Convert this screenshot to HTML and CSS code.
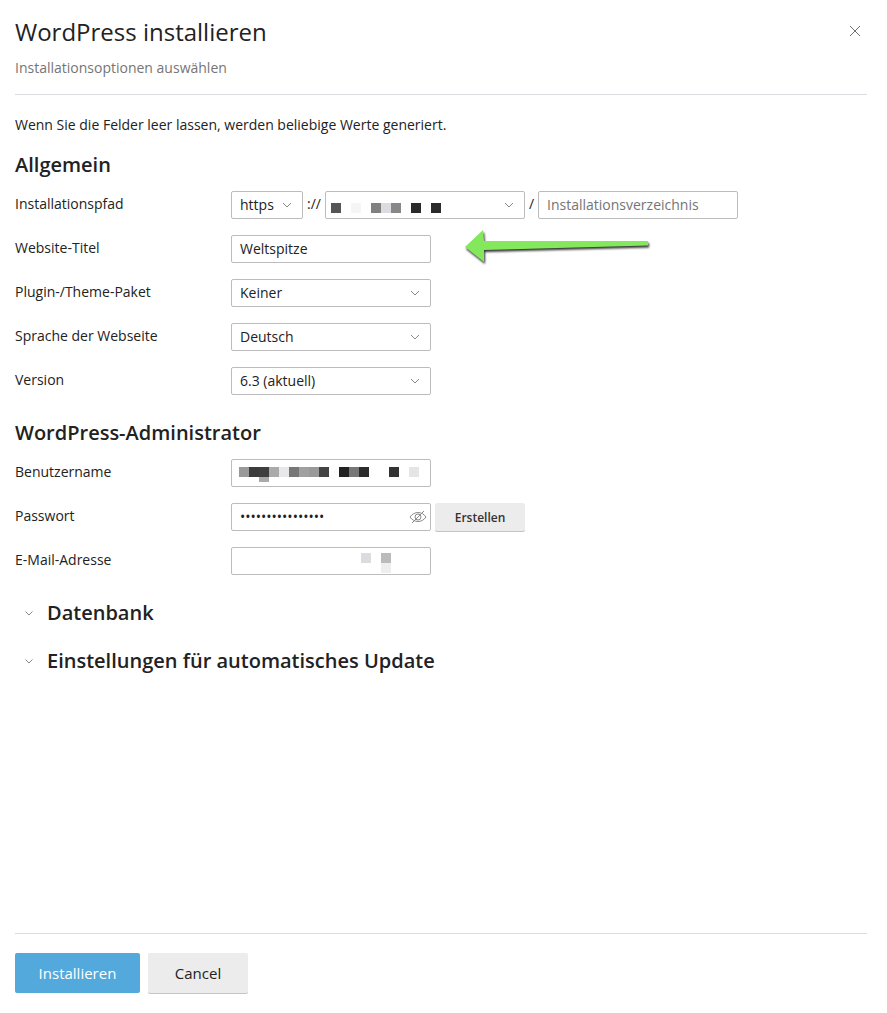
FILE: index.html
```html
<!DOCTYPE html>
<html lang="de">
<head>
  <meta charset="UTF-8">
  <meta name="viewport" content="width=device-width, initial-scale=1.0">
  <title>WordPress installieren</title>
  <link rel="stylesheet" href="styles.css">
</head>
<body>
  <div class="dialog">
    <div class="dialog-header">
      <h1>WordPress installieren</h1>
      <p class="subtitle">Installationsoptionen auswählen</p>
      <svg class="close-icon" width="12" height="12" viewBox="0 0 12 12"><path d="M1 1l10 10M11 1L1 11" fill="none" stroke="#6f6f6f" stroke-width="1"/></svg>
    </div>

    <div class="dialog-body">
      <p class="hint">Wenn Sie die Felder leer lassen, werden beliebige Werte generiert.</p>

      <h2>Allgemein</h2>
      <div class="form-row">
        <label>Installationspfad</label>
        <div class="control-group">
          <div class="field select field-scheme">https<svg class="chevron" width="10" height="6" viewBox="0 0 10 6"><path d="M1 1l4 4 4-4" fill="none" stroke="#888"/></svg></div>
          <span class="sep sep-scheme">://</span>
          <div class="field select field-domain">
            <div class="pixels pixels-domain">
              <i class="s55"></i><i></i><i class="sf5"></i><i></i><i class="s80"></i><i class="sdc"></i><i class="s88"></i><i></i><i class="s2a"></i><i></i><i class="s2a"></i>
            </div>
            <svg class="chevron" width="10" height="6" viewBox="0 0 10 6"><path d="M1 1l4 4 4-4" fill="none" stroke="#888"/></svg>
          </div>
          <span class="sep sep-slash">/</span>
          <div class="field field-dir placeholder">Installationsverzeichnis</div>
        </div>
      </div>
      <div class="form-row">
        <label>Website-Titel</label>
        <div class="field field-wide">Weltspitze</div>
      </div>
      <div class="form-row">
        <label>Plugin-/Theme-Paket</label>
        <div class="field select field-wide">Keiner<svg class="chevron" width="10" height="6" viewBox="0 0 10 6"><path d="M1 1l4 4 4-4" fill="none" stroke="#888"/></svg></div>
      </div>
      <div class="form-row">
        <label>Sprache der Webseite</label>
        <div class="field select field-wide">Deutsch<svg class="chevron" width="10" height="6" viewBox="0 0 10 6"><path d="M1 1l4 4 4-4" fill="none" stroke="#888"/></svg></div>
      </div>
      <div class="form-row">
        <label>Version</label>
        <div class="field select field-wide">6.3 (aktuell)<svg class="chevron" width="10" height="6" viewBox="0 0 10 6"><path d="M1 1l4 4 4-4" fill="none" stroke="#888"/></svg></div>
      </div>

      <h2 class="section-admin">WordPress-Administrator</h2>
      <div class="form-row">
        <label>Benutzername</label>
        <div class="field field-wide">
          <div class="pixels pixels-user">
            <i class="s99"></i><i class="s3c"></i><i class="s3f"><b class="drip"></b></i><i class="saa"></i><i class="se8"></i><i class="s77"></i><i class="sa0"></i><i class="s99"></i><i class="s44"></i><i></i><i class="s22"></i><i class="s77"></i><i class="s2c"></i><i></i><i></i><i class="s33"></i><i></i><i class="se5"></i>
          </div>
        </div>
      </div>
      <div class="form-row">
        <label>Passwort</label>
        <div class="control-group">
          <div class="field field-wide field-password">
            <span class="dots">••••••••••••••••</span>
            <svg class="eye" width="18" height="14" viewBox="0 0 18 14"><path d="M1 7c2-3 5-4.500 8-4.500S15 4 17 7c-2 3-5 4.500-8 4.500S3 10 1 7z" fill="none" stroke="#8a8a8a"/><circle cx="9" cy="7" r="3" fill="none" stroke="#8a8a8a"/><path d="M3 13L15 1" stroke="#8a8a8a"/></svg>
          </div>
          <button class="btn btn-generate" type="button">Erstellen</button>
        </div>
      </div>
      <div class="form-row">
        <label>E-Mail-Adresse</label>
        <div class="field field-wide">
          <div class="pixels pixels-mail">
            <i class="sdc"></i><i></i><i class="sbb"><b class="drip-long"></b></i>
          </div>
        </div>
      </div>

      <div class="collapsible collapsible-first">
        <svg class="chevron-small" width="8" height="5" viewBox="0 0 8 5"><path d="M.5.500L4 4 7.500.500" fill="none" stroke="#888"/></svg>
        <h2>Datenbank</h2>
      </div>
      <div class="collapsible">
        <svg class="chevron-small" width="8" height="5" viewBox="0 0 8 5"><path d="M.5.500L4 4 7.500.500" fill="none" stroke="#888"/></svg>
        <h2>Einstellungen für automatisches Update</h2>
      </div>
    </div>

    <div class="dialog-footer">
      <button class="btn btn-primary" type="button">Installieren</button>
      <button class="btn btn-cancel" type="button">Cancel</button>
    </div>
  </div>

  <!-- annotation drawn on top of the screenshot -->
  <svg class="arrow" width="200" height="44" viewBox="0 0 200 44">
    <path d="M5 17L23 0l1 11h164v4.500L24 20v12z" fill="#84e85c"/>
  </svg>
</body>
</html>
```

FILE: styles.css
```css
body {
  font-family: 'Open Sans', sans-serif;
  font-size: 14px;
  color: #222;
  margin: 0;
  padding: 0;
  background-color: #fff;
}

.dialog {
  height: 1013px;
  padding: 0 20px 0 15px;
  box-sizing: border-box;
  display: flex;
  flex-direction: column;
}

.dialog-header {
  position: relative;
  height: 94px;
  border-bottom: 1px solid #dcdce0;
}

h1 {
  font-size: 24px;
  font-weight: 400;
  line-height: 32px;
  margin: 0;
  padding-top: 16px;
}

.subtitle {
  font-size: 14px;
  line-height: 20px;
  color: #757575;
  margin: 10px 0 0;
}

.close-icon {
  position: absolute;
  right: 6px;
  top: 25px;
}

.dialog-body {
  flex: 1;
}

.hint {
  line-height: 20px;
  margin: 20px 0 0;
}

h2 {
  font-size: 20px;
  font-weight: 600;
  line-height: 28px;
  margin: 0;
}

.dialog-body > h2 {
  margin-top: 16px;
  margin-bottom: 12px;
}

.dialog-body > .section-admin {
  margin-top: 24px;
}

.form-row {
  display: flex;
  height: 28px;
  margin-bottom: 16px;
}

.form-row label {
  width: 216px;
  flex: none;
  line-height: 26px;
}

.control-group {
  display: flex;
}

.field {
  position: relative;
  height: 28px;
  box-sizing: border-box;
  border: 1px solid #bcbcbc;
  border-radius: 2px;
  padding: 0 8px;
  line-height: 26px;
  background-color: #fff;
}

.field-wide {
  width: 200px;
}

.field-scheme {
  width: 72px;
}

.field-domain {
  width: 200px;
}

.field-dir {
  width: 200px;
}

.placeholder {
  color: #757575;
}

.sep {
  width: 22px;
  line-height: 26px;
  text-align: center;
}

.sep-slash {
  width: 13px;
}

.chevron {
  position: absolute;
  right: 10px;
  top: 10px;
}

.pixels {
  position: absolute;
  display: flex;
}

.pixels i {
  display: block;
  position: relative;
  width: 10px;
  height: 10px;
}

.pixels-domain {
  left: 5px;
  top: 11px;
}

.pixels-user {
  left: 7px;
  top: 7px;
}

.pixels-mail {
  left: 129px;
  top: 5px;
}

.drip {
  position: absolute;
  left: 0;
  top: 10px;
  width: 10px;
  height: 5px;
  background-color: #aaa;
}

.drip-long {
  position: absolute;
  left: 0;
  top: 10px;
  width: 10px;
  height: 10px;
  background-color: #eee;
}

.s22 { background-color: #222; }
.s2a { background-color: #2a2a2a; }
.s2c { background-color: #2c2c2c; }
.s33 { background-color: #333; }
.s3c { background-color: #3c3c3c; }
.s3f { background-color: #3f3f3f; }
.s44 { background-color: #444; }
.s55 { background-color: #555; }
.s77 { background-color: #777; }
.s80 { background-color: #808080; }
.s88 { background-color: #888; }
.s99 { background-color: #999; }
.sa0 { background-color: #a0a0a0; }
.saa { background-color: #aaa; }
.sbb { background-color: #bbb; }
.sdc { background-color: #dcdce0; }
.se5 { background-color: #e5e5e5; }
.se8 { background-color: #e8e8ec; }
.sf5 { background-color: #f5f5f5; }

.dots {
  font-size: 14px;
  letter-spacing: 0;
}

.eye {
  position: absolute;
  right: 3px;
  top: 6px;
}

.btn {
  font-family: 'Open Sans', sans-serif;
  border: none;
  border-radius: 2px;
  cursor: pointer;
}

.btn-generate {
  margin-left: 4px;
  width: 90px;
  height: 28px;
  font-size: 12px;
  font-weight: 600;
  color: #333;
  background-color: #ececec;
  box-shadow: 0 1px 0 #c4c4c4;
}

.collapsible {
  display: flex;
  align-items: center;
  height: 28px;
  margin-bottom: 20px;
}

.collapsible-first {
  margin-top: 24px;
}

.chevron-small {
  margin-left: 10px;
  margin-right: 14px;
}

.dialog-footer {
  border-top: 1px solid #dcdce0;
  height: 80px;
  padding-top: 19px;
  box-sizing: border-box;
  display: flex;
  gap: 8px;
  align-items: flex-start;
}

.btn-primary {
  width: 125px;
  height: 40px;
  font-size: 15px;
  font-weight: 400;
  color: #fff;
  background-color: #53a9dc;
}

.btn-cancel {
  width: 100px;
  height: 40px;
  font-size: 15px;
  font-weight: 400;
  color: #222;
  background-color: #ececec;
  box-shadow: 0 1px 0 #c4c4c4;
}

.arrow {
  position: absolute;
  left: 460px;
  top: 230px;
  filter: drop-shadow(1px 2px 1px rgba(0, 0, 0, 0.8));
}
```
